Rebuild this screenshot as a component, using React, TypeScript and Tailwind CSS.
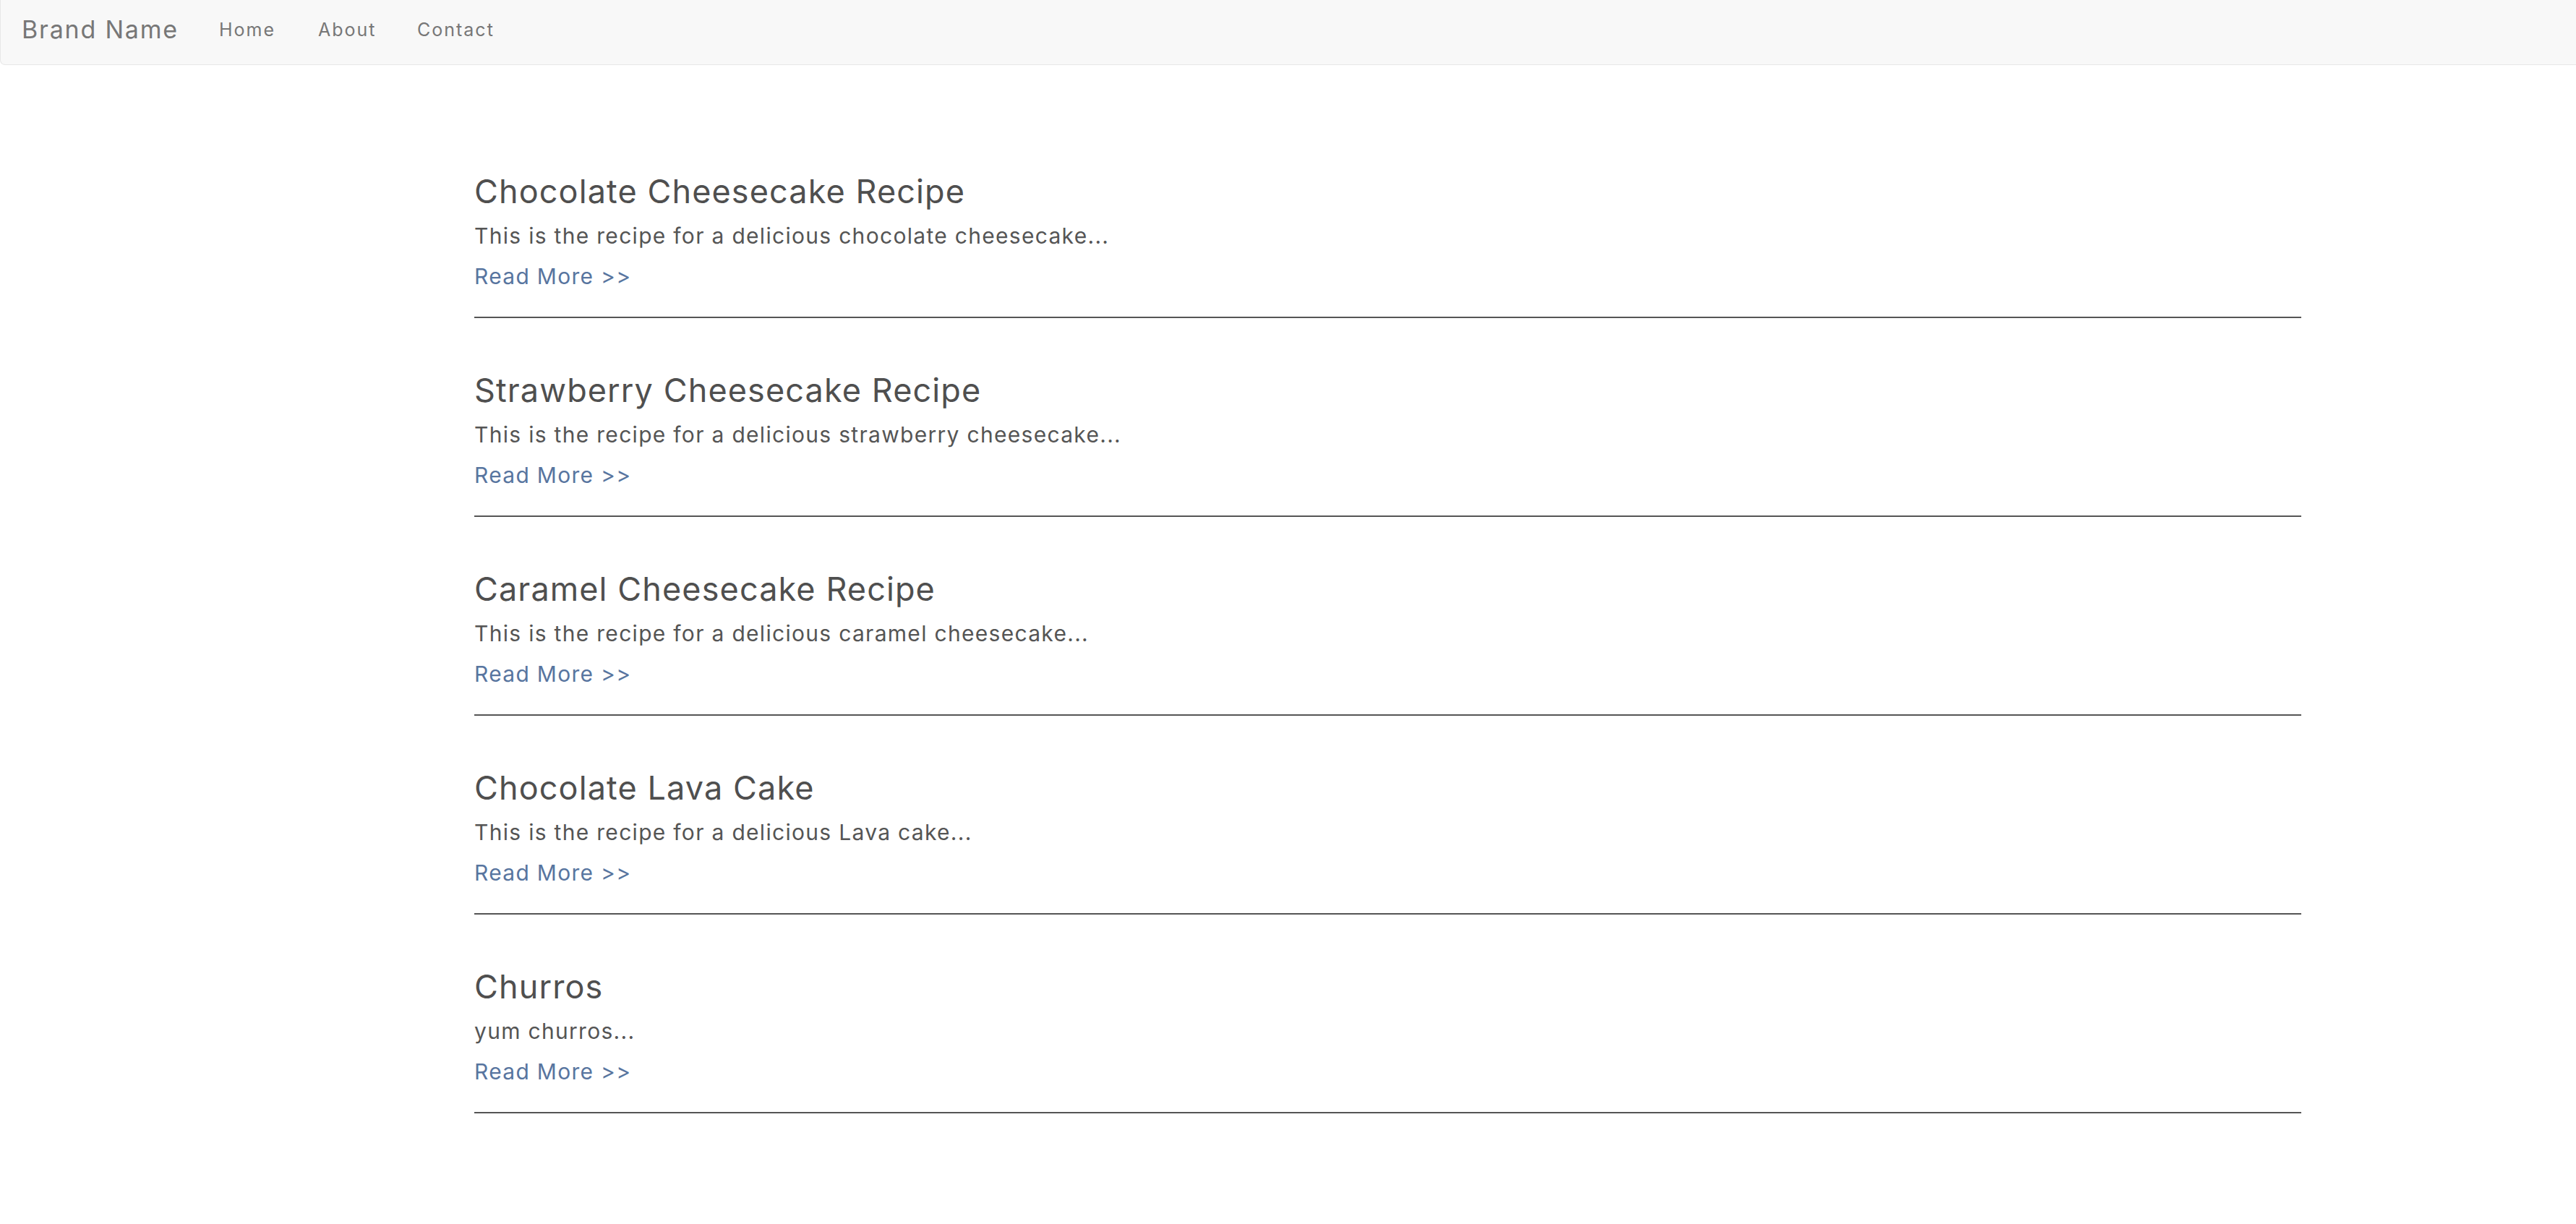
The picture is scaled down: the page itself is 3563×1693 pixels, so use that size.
const recipes = [
  { title: "Chocolate Cheesecake Recipe", blurb: "This is the recipe for a delicious chocolate cheesecake..." },
  { title: "Strawberry Cheesecake Recipe", blurb: "This is the recipe for a delicious strawberry cheesecake..." },
  { title: "Caramel Cheesecake Recipe", blurb: "This is the recipe for a delicious caramel cheesecake..." },
  { title: "Chocolate Lava Cake", blurb: "This is the recipe for a delicious Lava cake..." },
  { title: "Churros", blurb: "yum churros..." },
];

const navLinks = ["Home", "About", "Contact"];

export default function App() {
  return (
    <div className="min-h-screen bg-white font-['Inter',sans-serif]">
      {/* Navbar */}
      <nav className="flex h-[90px] bg-[#f8f8f8] border-l border-b border-[#e7e7e7] rounded-bl-[7px]">
        <a href="#" className="pl-[29px] w-[302px] text-[34px] leading-[81px] tracking-[1.8px] text-[#777]">
          Brand Name
        </a>
        <ul className="flex">
          {navLinks.map((link) => (
            <li key={link} className="w-[137px]">
              <a href="#" className="block text-[25px] leading-[82px] tracking-[2px] text-[#777]">
                {link}
              </a>
            </li>
          ))}
        </ul>
      </nav>

      {/* Recipe list */}
      <main className="ml-[656px] w-[2527px] pt-[75px] pb-[40px]">
        {recipes.map((r) => (
          <article key={r.title} className="pt-[72px]">
            <h3 className="text-[45px] leading-[56px] tracking-[1.1px] text-[#4f4f4f]">{r.title}</h3>
            <p className="mt-[5px] text-[30px] leading-[56px] tracking-[1.3px] text-[#555]">{r.blurb}</p>
            <a href="#" className="block text-[30px] leading-[56px] tracking-[1.3px] text-[#58759f]">
              Read More &gt;&gt;
            </a>
            <hr className="mt-[28px] h-[2px] border-0 bg-[#555]" />
          </article>
        ))}
      </main>
    </div>
  );
}
